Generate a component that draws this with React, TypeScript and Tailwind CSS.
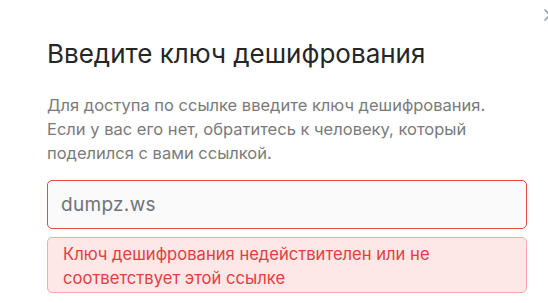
import { X } from "lucide-react";

export default function App() {
  return (
    <div className="relative h-[303px] w-[548px] overflow-hidden bg-white font-['Inter',sans-serif]">
      {/* Close button, mostly outside the viewport */}
      <button className="absolute left-[540px] top-[5px] text-gray-400">
        <X className="h-[20px] w-[20px]" strokeWidth={2} />
      </button>

      <div className="pl-[47px] pr-[21px] pt-[38px]">
        <h2 className="text-[26px] leading-[32px] font-normal text-[#262626]">
          Введите ключ дешифрования
        </h2>

        <p className="mt-[23px] text-[16.5px] leading-[24px] text-[#7a7a7a]">
          Для доступа по ссылке введите ключ дешифрования. Если у вас его нет, обратитесь к человеку, который
          поделился с вами ссылкой.
        </p>

        <input
          type="text"
          placeholder="dumpz.ws"
          className="mt-[15px] block h-[49px] w-full rounded-[5px] border border-[#f04444] bg-[#fafafa] px-[13px] text-[19px] tracking-[0.3px] text-[#333] placeholder:text-[#6e727a] outline-none"
        />

        <div className="mt-[8px] rounded-[5px] border border-[#f9a8a8] bg-[#fee7e7] px-[15px] pt-[4px] pb-[2px] text-[16.6px] leading-[24px] text-[#e43d3d]">
          Ключ дешифрования недействителен или не соответствует этой ссылке
        </div>
      </div>
    </div>
  );
}
